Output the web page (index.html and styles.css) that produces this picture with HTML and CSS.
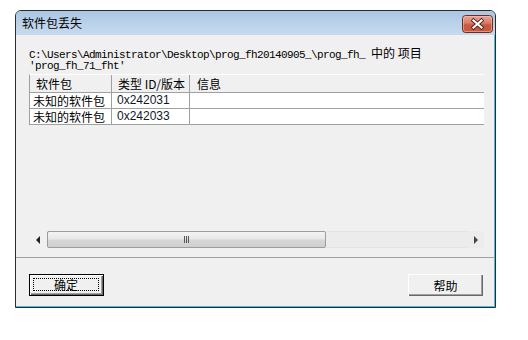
FILE: index.html
```html
<!DOCTYPE html>
<html lang="zh-CN">
<head>
<meta charset="utf-8">
<title>软件包丢失</title>
<link rel="stylesheet" href="styles.css">
</head>
<body>
<div class="window">
  <div class="titlebar">
    <span class="title">软件包丢失</span>
    <button class="close" aria-label="关闭">
      <svg width="31" height="18" viewBox="0 0 31 18">
        <defs>
          <linearGradient id="cg" x1="0" y1="0" x2="0" y2="1">
            <stop offset="0" stop-color="#e9aa9c"/>
            <stop offset="0.45" stop-color="#d77b66"/>
            <stop offset="0.55" stop-color="#c85a40"/>
            <stop offset="1" stop-color="#c8573c"/>
          </linearGradient>
        </defs>
        <rect x="0.5" y="0.5" width="30" height="17" rx="3" fill="url(#cg)" stroke="#6b2d22"/>
        <rect x="1.5" y="1.5" width="28" height="15" rx="2" fill="none" stroke="#f2c6b8" stroke-opacity="0.55"/>
        <path d="M11.5 5.5 L19.5 12.5 M19.5 5.5 L11.5 12.5" stroke="#4a1c16" stroke-width="3.8" stroke-linecap="square"/>
        <path d="M11.5 5.5 L19.5 12.5 M19.5 5.5 L11.5 12.5" stroke="#ffffff" stroke-width="2.2" stroke-linecap="square"/>
      </svg>
    </button>
  </div>
  <div class="content">
    <p class="path">C:\Users\Administrator\Desktop\prog_fh20140905_\prog_fh_ <span class="cjk">中的 项目</span><br>'prog_fh_71_fht'</p>
    <div class="list">
      <div class="cols head">
        <div class="cell">软件包</div>
        <div class="cell">类型 ID/版本</div>
        <div class="cell last">信息</div>
      </div>
      <div class="cols row">
        <div class="cell first">未知的软件包</div>
        <div class="cell num">0x242031</div>
        <div class="cell last"></div>
      </div>
      <div class="cols row">
        <div class="cell first">未知的软件包</div>
        <div class="cell num">0x242033</div>
        <div class="cell last"></div>
      </div>
      <div class="fill"></div>
      <div class="scrollbar">
        <div class="arrow"><span class="tri-left"></span></div>
        <div class="thumb"><span class="grip"><i></i><i></i><i></i></span></div>
        <div class="track"></div>
        <div class="arrow"><span class="tri-right"></span></div>
      </div>
    </div>
    <div class="sep"></div>
    <div class="buttons">
      <button class="btn default"><span class="focus">确定</span></button>
      <button class="btn">帮助</button>
    </div>
  </div>
</div>
</body>
</html>
```

FILE: styles.css
```css
body {
  margin: 0;
  padding: 10px 0 0 15px;
  background: #ffffff;
  font-family: "Noto Sans CJK SC", "Liberation Sans", sans-serif;
  font-size: 12px;
  color: #000;
}

.window {
  width: 481px;
  height: 298px;
  box-sizing: border-box;
  border: 1px solid #2c2c2c;
  border-radius: 6px 6px 0 0;
  background: #f0f0f0;
  display: flex;
  flex-direction: column;
  box-shadow: inset -1px -1px 0 #3fc1ea;
}

.titlebar {
  height: 24px;
  flex: none;
  display: flex;
  align-items: flex-start;
  padding: 0 2px 0 6px;
  border-radius: 5px 5px 0 0;
  background: linear-gradient(to bottom, #a9c6e3 0%, #bcd3ea 55%, #c6daee 100%);
}

.title {
  font-size: 12px;
  line-height: 24px;
  color: #000;
}

.close {
  margin: 4px 0 0 auto;
  padding: 0;
  border: none;
  background: none;
  width: 31px;
  height: 18px;
  display: block;
}

.close svg {
  display: block;
}

.content {
  flex: 1;
  display: flex;
  flex-direction: column;
  padding: 12px 10px 0 13px;
}

.path {
  margin: 0;
  font-family: "Liberation Mono", "DejaVu Sans Mono", monospace;
  font-size: 11px;
  letter-spacing: -0.6px;
  line-height: 11px;
  height: 22px;
  white-space: nowrap;
}

.path .cjk {
  font-family: "Noto Sans CJK SC", sans-serif;
  font-size: 12px;
  letter-spacing: 0;
}

.list {
  margin-top: 5px;
  width: 455px;
  height: 174px;
  display: flex;
  flex-direction: column;
}

.cols {
  display: grid;
  grid-template-columns: 82px 78px 1fr;
  border-left: 1px solid #a0a0a0;
  box-sizing: border-box;
}

.cell {
  border-right: 1px solid #a0a0a0;
  padding-left: 6px;
  white-space: nowrap;
  overflow: hidden;
}

.cell.last {
  border-right: none;
}

.head {
  height: 19px;
  border-top: 1px solid #ffffff;
  border-bottom: 1px solid #a0a0a0;
  background: #f0f0f0;
}

.head .cell {
  line-height: 17px;
}

.head .cell.last {
  padding-left: 7px;
}

.row {
  height: 16px;
  border-bottom: 1px solid #a0a0a0;
  background: #ffffff;
}

.row .cell {
  line-height: 15px;
}

.row .cell.first {
  padding-left: 3px;
}

.row .cell.num {
  font-family: "Liberation Sans", sans-serif;
  font-size: 12px;
  color: #101828;
  padding-left: 5px;
}

.fill {
  flex: 1;
}

.scrollbar {
  height: 17px;
  flex: none;
  display: flex;
  background: #ececec;
  box-shadow: inset 0 0 0 1px #e4e4e4;
}

.arrow {
  width: 18px;
  display: flex;
  align-items: center;
  justify-content: center;
  background: #f0f0f0;
}

.arrow:last-child {
  width: 17px;
  background: #ececec;
}

.tri-left {
  width: 0;
  height: 0;
  border-top: 4px solid transparent;
  border-bottom: 4px solid transparent;
  border-right: 4px solid #222;
}

.tri-right {
  width: 0;
  height: 0;
  border-top: 4px solid transparent;
  border-bottom: 4px solid transparent;
  border-left: 4px solid #444;
}

.thumb {
  width: 279px;
  box-sizing: border-box;
  border: 1px solid #9c9c9c;
  border-radius: 2px;
  background: linear-gradient(to bottom, #f4f4f4 0%, #e8e8e8 45%, #d6d6d6 55%, #cfcfcf 100%);
  display: flex;
  align-items: center;
  justify-content: center;
}

.grip {
  display: flex;
  gap: 1px;
}

.grip i {
  display: block;
  width: 1px;
  height: 7px;
  background: #555;
}

.track {
  flex: 1;
}

.sep {
  height: 1px;
  background: #a0a0a0;
  margin: 9px -10px 0 -13px;
  flex: none;
}

.buttons {
  margin-top: 16px;
  width: 455px;
  display: flex;
  justify-content: space-between;
}

.btn {
  width: 75px;
  height: 22px;
  padding: 0;
  border: none;
  background: #f0f0f0;
  font-family: "Noto Sans CJK SC", sans-serif;
  font-size: 12px;
  color: #000;
  box-shadow: inset 1px 1px 0 #ffffff, inset -1px -1px 0 #696969, inset -2px -2px 0 #a0a0a0;
  display: flex;
  align-items: center;
  justify-content: center;
  margin-right: 1px;
}

.btn.default {
  border: 1px solid #000;
  margin-right: 0;
  box-shadow: inset 1px 1px 0 #ffffff, inset -1px -1px 0 #696969, inset -2px -2px 0 #a0a0a0;
  padding: 2px;
}

.focus {
  flex: 1;
  align-self: stretch;
  border: 1px dotted #000;
  display: flex;
  align-items: center;
  justify-content: center;
  margin: 1px 2px 2px 1px;
}
```
